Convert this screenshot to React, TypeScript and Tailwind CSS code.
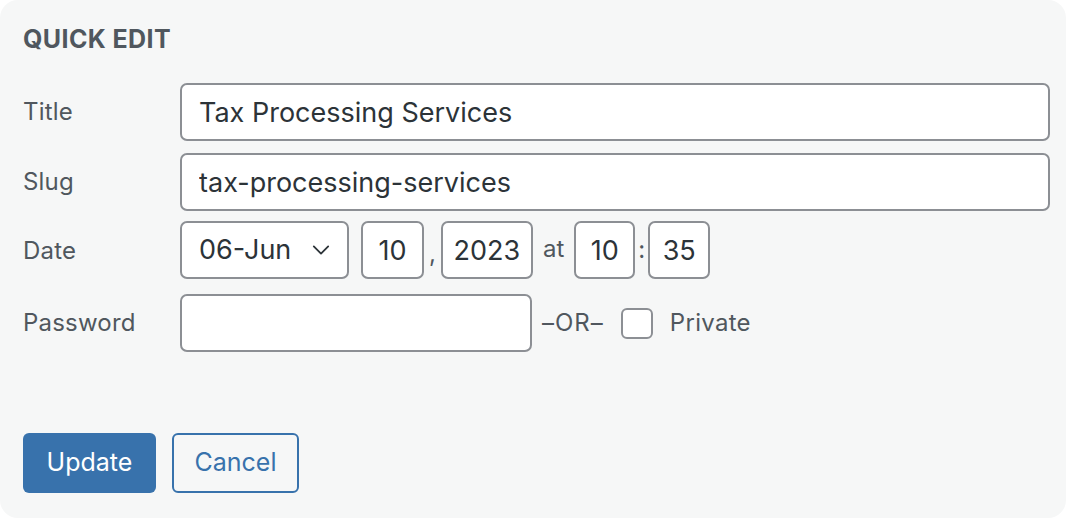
import React from 'react';

const box =
  "h-[58px] rounded-[7px] border-2 border-[#8c8f94] bg-white text-[27px] text-[#2c3338] outline-none";

const Row = ({ label, children }: { label: string; children: React.ReactNode }) => (
  <div className="flex items-center">
    <div className="w-[157px] shrink-0 text-[24px] tracking-[0.2px] text-[#50575e]">{label}</div>
    <div className="flex min-w-0 flex-1 items-center">{children}</div>
  </div>
);

export default function App() {
  return (
    <div className="h-[518px] w-[1066px] bg-white" style={{ fontFamily: 'Inter, "Noto Sans", sans-serif' }}>
      <div className="flex h-full flex-col rounded-[18px] bg-[#f6f7f7] pl-[23px] pr-[16px] pt-[27px]">
        <h2 className="text-[25px] font-bold leading-none tracking-[0.4px] text-[#50575e]">QUICK EDIT</h2>

        <div className="mt-[31px] flex flex-col gap-[12px]">
          <Row label="Title">
            <input className={`${box} w-full px-[17px]`} defaultValue="Tax Processing Services" />
          </Row>
          <Row label="Slug">
            <input className={`${box} w-full px-[17px]`} defaultValue="tax-processing-services" />
          </Row>
          <Row label="Date">
            <div className={`${box} -mt-[2px] flex w-[169px] items-center justify-between pl-[17px] pr-[14px]`}>
              <span>06-Jun</span>
              <svg width="24" height="24" viewBox="0 0 20 20" fill="none" stroke="#2c3338" strokeWidth="1.5" strokeLinecap="round" strokeLinejoin="round">
                <path d="M4 7l6 6 6-6" />
              </svg>
            </div>
            <input className={`${box} -mt-[2px] ml-[12px] w-[63px] px-0 text-center`} defaultValue="10" />
            <span className="mx-[5px] mt-[6px] text-[24px] text-[#50575e]">,</span>
            <input className={`${box} -mt-[2px] w-[92px] px-0 text-center`} defaultValue="2023" />
            <span className="mx-[10px] -mt-[4px] text-[24px] text-[#50575e]">at</span>
            <input className={`${box} -mt-[2px] w-[61px] px-0 text-center`} defaultValue="10" />
            <span className="mx-[3px] -mt-[2px] text-[24px] text-[#50575e]">:</span>
            <input className={`${box} -mt-[2px] w-[62px] px-0 text-center`} defaultValue="35" />
          </Row>
          <div className="mt-[3px]">
            <Row label="Password">
              <input className={`${box} w-[352px] px-[17px]`} defaultValue="" />
              <span className="ml-[10px] text-[24px] tracking-[1px] text-[#50575e]">–OR–</span>
              <span className="ml-[17px] inline-block h-[31px] w-[32px] rounded-[6px] border-2 border-[#8c8f94] bg-white" />
              <span className="ml-[17px] text-[24px] tracking-[0.3px] text-[#50575e]">Private</span>
            </Row>
          </div>
        </div>

        <div className="mt-[81px] flex gap-[16px]">
          <button className="h-[60px] w-[133px] rounded-[6px] bg-[#3872ac] text-[25px] text-white">Update</button>
          <button className="h-[60px] w-[127px] rounded-[6px] border-2 border-[#3872ac] bg-[#f6f7f7] text-[25px] text-[#3872ac]">Cancel</button>
        </div>
      </div>
    </div>
  );
}
